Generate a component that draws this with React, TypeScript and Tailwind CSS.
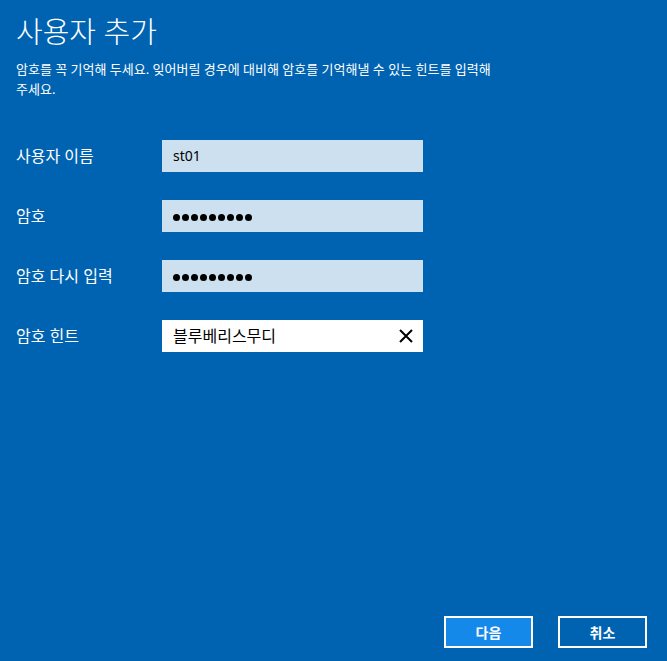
import React from "react";

const font = { fontFamily: '"Noto Sans", "Noto Sans CJK KR", sans-serif' };

function Dots() {
  return (
    <div className="flex items-center gap-[2px] mt-[3px]">
      {Array.from({ length: 9 }).map((_, i) => (
        <span key={i} className="block w-[7px] h-[7px] rounded-full bg-black" />
      ))}
    </div>
  );
}

function Row({ label, children, white }: { label: string; children: React.ReactNode; white?: boolean }) {
  return (
    <div className="flex items-center h-[32px]">
      <div className="w-[146px] text-[16px] leading-[20px] text-white">{label}</div>
      <div
        className={`w-[261px] h-[32px] flex items-center pl-[11px] pr-[10px] ${
          white ? "bg-white" : "bg-[#cce0ef]"
        }`}
      >
        {children}
      </div>
    </div>
  );
}

export default function App() {
  return (
    <div
      className="w-full h-[661px] bg-[#0063b1] flex flex-col pl-[16px] pr-[20px] pt-[14px] pb-[13px] overflow-hidden"
      style={font}
    >
      <h1 className="text-[29px] leading-[36px] text-white font-light">사용자 추가</h1>
      <p className="mt-[9px] text-[13px] leading-[20px] text-white w-[485px]">
        암호를 꼭 기억해 두세요. 잊어버릴 경우에 대비해 암호를 기억해낼 수 있는 힌트를 입력해 주세요.
      </p>
      <div className="mt-[41px] flex flex-col gap-[28px]">
        <Row label="사용자 이름">
          <span className="text-[14px] text-black leading-[20px]">st01</span>
        </Row>
        <Row label="암호">
          <Dots />
        </Row>
        <Row label="암호 다시 입력">
          <Dots />
        </Row>
        <Row label="암호 힌트" white>
          <span className="text-[16px] text-black leading-[20px] flex-1">블루베리스무디</span>
          <svg width="14" height="14" viewBox="0 0 14 14">
            <path d="M1 1 L13 13 M13 1 L1 13" stroke="black" strokeWidth="2" />
          </svg>
        </Row>
      </div>
      <div className="mt-auto flex justify-end gap-[25px]">
        <button className="w-[89px] h-[32px] border-2 border-white bg-[#1589ea] text-white text-[14px] font-bold">
          다음
        </button>
        <button className="w-[89px] h-[32px] border-2 border-white bg-[#0063b1] text-white text-[14px] font-bold">
          취소
        </button>
      </div>
    </div>
  );
}
